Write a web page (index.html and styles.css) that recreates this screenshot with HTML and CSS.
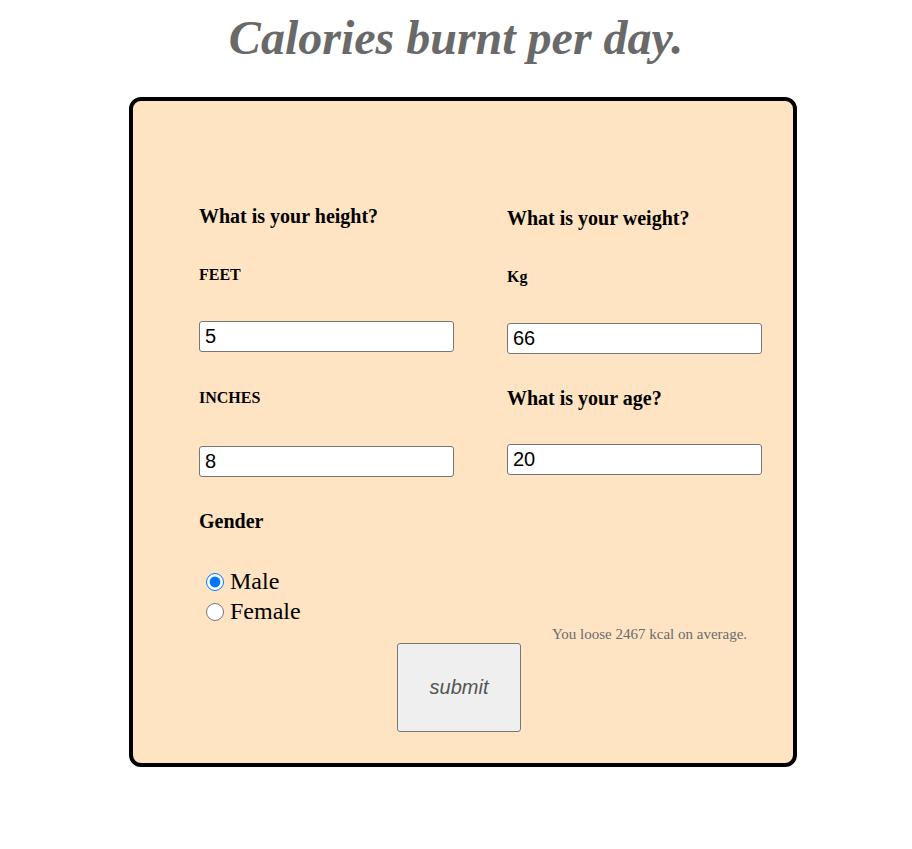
FILE: index.html
```html
<!DOCTYPE html>
<html>
<head>
<meta charset="utf-8">
<title>Calories burnt per day.</title>
<link rel="stylesheet" href="styles.css">
</head>
<body>
<h1 class="title">Calories burnt per day.</h1>
<form class="card">
  <div class="grid">
    <div class="col col-left">
      <h3 class="q">What is your height?</h3>
      <h4 class="unit unit-feet">FEET</h4>
      <input class="field field-feet" type="text" value="5">
      <h4 class="unit unit-inches">INCHES</h4>
      <input class="field field-inches" type="text" value="8">
      <h3 class="q q-gender">Gender</h3>
      <div class="radios">
        <label class="opt"><input class="radio" type="radio" name="g" checked>Male</label>
        <label class="opt"><input class="radio" type="radio" name="g">Female</label>
      </div>
    </div>
    <div class="col col-right">
      <h3 class="q">What is your weight?</h3>
      <h4 class="unit unit-kg">Kg</h4>
      <input class="field field-kg" type="text" value="66">
      <h3 class="q q-age">What is your age?</h3>
      <input class="field field-age" type="text" value="20">
    </div>
  </div>
  <p class="result">You loose 2467 kcal on average.</p>
  <button class="submit" type="button">submit</button>
</form>
</body>
</html>
```

FILE: styles.css
```css
body {
  margin: 8px;
  font-family: "Liberation Serif", "Times New Roman", serif;
  background: #ffffff;
}

.title {
  margin: 2px 0 32px;
  font-size: 48px;
  font-weight: bold;
  font-style: italic;
  text-align: center;
  color: #696969;
  line-height: normal;
}

.card {
  display: block;
  box-sizing: border-box;
  width: 668px;
  margin: 0 0 0 121px;
  padding: 104px 31px 31px 66px;
  border: 4px solid #000;
  border-radius: 12px;
  background: #ffe4c4;
}

.grid {
  display: grid;
  grid-template-columns: 255px 255px;
  column-gap: 53px;
  align-items: start;
}

.col {
  display: flex;
  flex-direction: column;
  align-items: flex-start;
}

.col-right {
  margin-top: 2px;
}

.q {
  margin: 0;
  font-size: 20px;
  font-weight: bold;
  color: #000;
}

.unit {
  margin: 37.5px 0 0;
  font-size: 16px;
  font-weight: bold;
  color: #000;
}

.field {
  box-sizing: border-box;
  width: 255px;
  height: 31px;
  margin: 37px 0 0;
  padding: 0 5px;
  border: 1px solid #767676;
  border-radius: 3px;
  background: #fff;
  font-family: "Liberation Sans", Arial, sans-serif;
  font-size: 20px;
  color: #000;
}

.field-inches {
  margin-top: 39px;
}

.unit-inches {
  margin-top: 37px;
}

.q-gender {
  margin-top: 33px;
}

.q-age {
  margin-top: 33px;
}

.field-age {
  margin-top: 34px;
}

.radios {
  margin-top: 34px;
  display: flex;
  flex-direction: column;
}

.opt {
  display: flex;
  align-items: center;
  height: 30px;
  font-size: 24px;
  color: #000;
  padding-left: 7px;
}

.radio {
  width: 18px;
  height: 18px;
  margin: 0 6px 0 0;
}

.result {
  margin: -1px 0 0 353px;
  font-size: 15px;
  color: #6b6b6b;
  line-height: normal;
}

.submit {
  display: block;
  box-sizing: border-box;
  width: 124px;
  height: 89px;
  margin: 0 0 0 198px;
  border: 1px solid #767676;
  border-radius: 3px;
  background: #efefef;
  font-family: "Liberation Sans", Arial, sans-serif;
  font-size: 20px;
  font-style: italic;
  color: #555;
}
```
